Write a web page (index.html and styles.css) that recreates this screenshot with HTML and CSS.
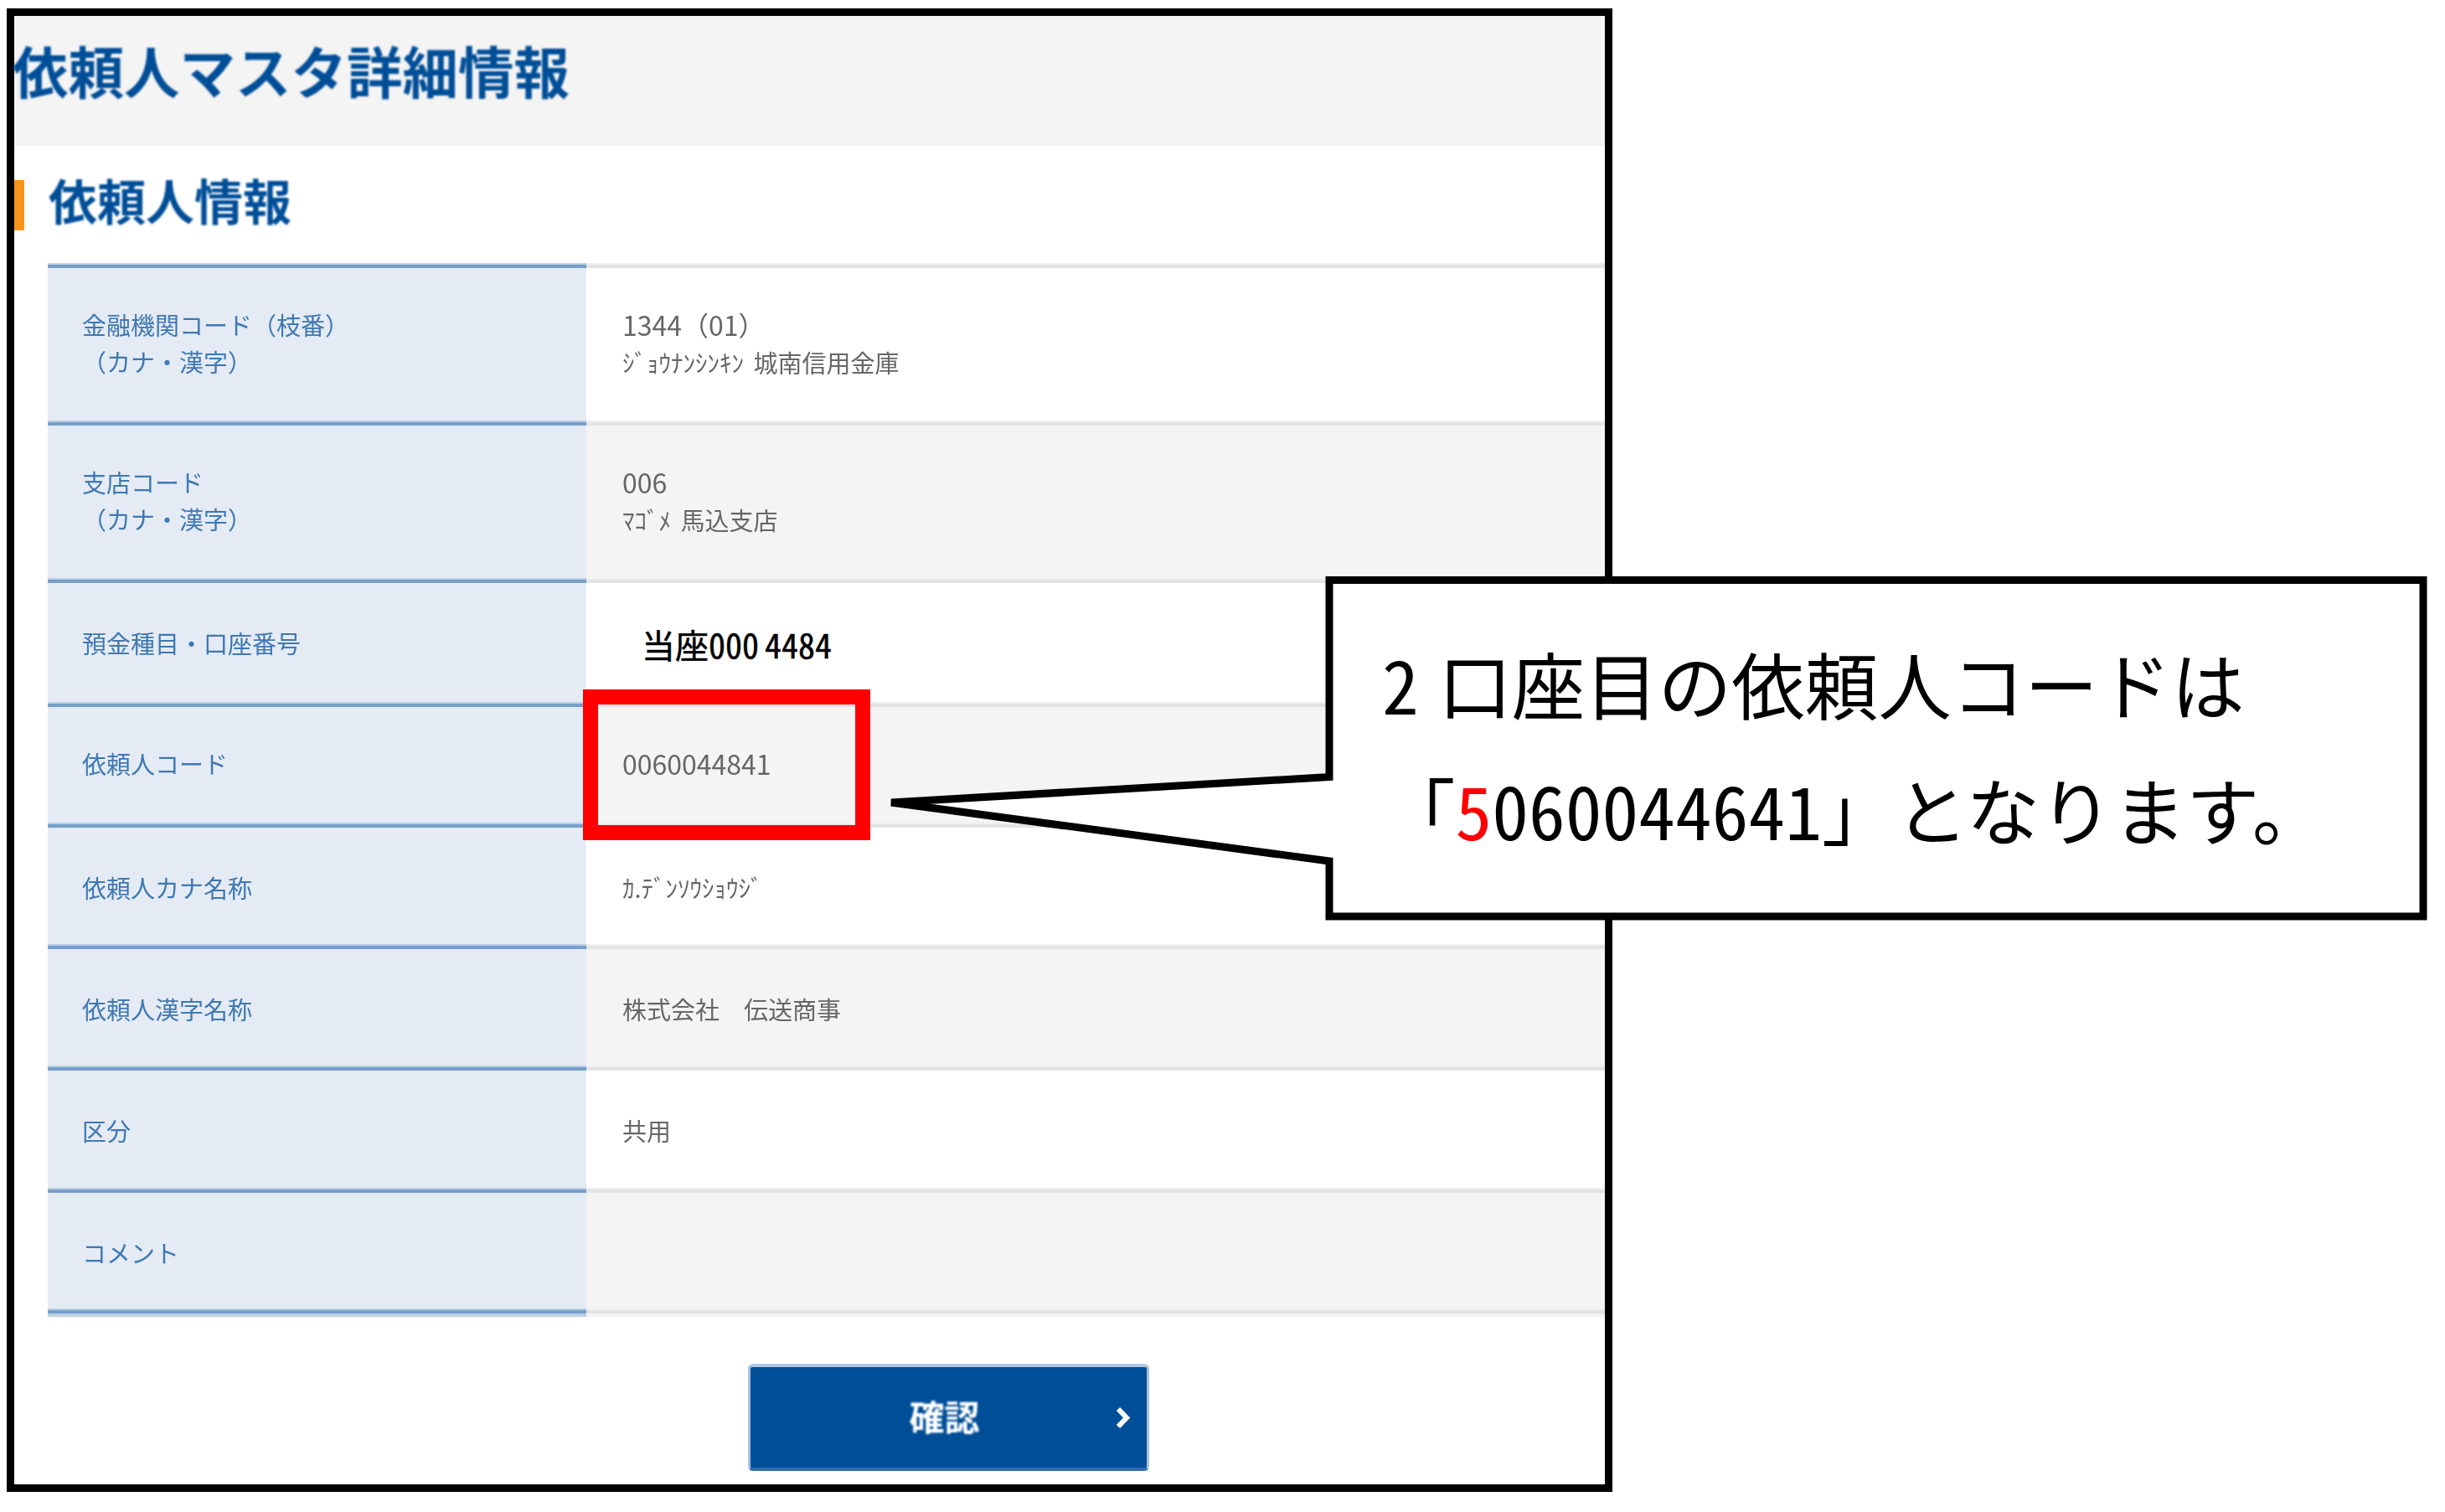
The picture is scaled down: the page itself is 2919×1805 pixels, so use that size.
FILE: index.html
```html
<!DOCTYPE html>
<html lang="ja">
<head>
    <meta charset="UTF-8">
    <title>依頼人マスタ詳細情報</title>
    <link rel="stylesheet" href="styles.css">
</head>
<body>
    <div class="frame">
        <div class="title-bar"><h1>依頼人マスタ詳細情報</h1></div>

        <div class="section-head">
            <span class="section-mark"></span>
            <h2>依頼人情報</h2>
        </div>

        <div class="rows">
            <div class="row tall">
                <div class="label">金融機関コード（枝番）<br>（カナ・漢字）</div>
                <div class="value spaced"><span class="num">1344（01）</span><br>ｼﾞｮｳﾅﾝｼﾝｷﾝ 城南信用金庫</div>
            </div>
            <div class="row alt tall">
                <div class="label">支店コード<br>（カナ・漢字）</div>
                <div class="value spaced"><span class="num">006</span><br>ﾏｺﾞﾒ 馬込支店</div>
            </div>
            <div class="row">
                <div class="label">預金種目・口座番号</div>
                <div class="value-typed">当座<span class="digits">000<span class="typed-gap">4484</span></span></div>
            </div>
            <div class="row alt tall">
                <div class="label">依頼人コード</div>
                <div class="value"><span class="num">0060044841</span></div>
            </div>
            <div class="row">
                <div class="label">依頼人カナ名称</div>
                <div class="value">ｶ.ﾃﾞﾝｿｳｼｮｳｼﾞ</div>
            </div>
            <div class="row alt">
                <div class="label">依頼人漢字名称</div>
                <div class="value">株式会社　伝送商事</div>
            </div>
            <div class="row">
                <div class="label">区分</div>
                <div class="value">共用</div>
            </div>
            <div class="row alt">
                <div class="label">コメント</div>
                <div class="value"></div>
            </div>
            <div class="row closing">
                <div class="label"></div>
                <div class="value"></div>
            </div>
        </div>

        <div class="actions">
            <button class="confirm-button">
                <span class="confirm-text">確認</span>
                <svg class="confirm-arrow" viewBox="0 0 17 27" width="17" height="27">
                    <polyline points="3,3 13,13.5 3,24" fill="none" stroke="#fff" stroke-width="6"/>
                </svg>
            </button>
        </div>
    </div>

    <div class="highlight-box"></div>

    <div class="callout">
        <svg class="callout-shape" viewBox="0 0 1850 420" width="1850" height="420">
            <polygon points="529,4.5 1835,4.5 1835,406 529,406 529,340 6,270 529,239.5" fill="#fff" stroke="#000" stroke-width="9"/>
        </svg>
        <div class="callout-text">
            <p class="first-line"><span class="digits">2</span> 口座目の依頼人コードは</p>
            <p>「<span class="digits"><span class="red">5</span>060044641</span>」となります。</p>
        </div>
    </div>
</body>
</html>
```

FILE: styles.css
```css
body {
    margin: 0;
    width: 2919px;
    height: 1805px;
    position: relative;
    overflow: hidden;
    background: #fff;
    font-family: "Noto Sans CJK JP", sans-serif;
}
.frame {
    box-sizing: border-box;
    width: 1917px;
    height: 1771px;
    margin: 10px 0 0 8px;
    border: 9px solid #000;
}
.title-bar {
    height: 155px;
    background: #f4f4f4;
    display: flex;
    align-items: center;
    padding: 0 0 28px 0;
    box-sizing: border-box;
}
.title-bar h1 {
    margin: 0 0 0 -2px;
    font-size: 66.5px;
    line-height: 80px;
    color: #004e98;
    filter: blur(0.9px);
}
.section-head {
    height: 142px;
    display: flex;
    align-items: flex-start;
}
.section-mark {
    width: 12px;
    height: 60px;
    margin-top: 41px;
    background: #f7941d;
}
.section-head h2 {
    margin: 26px 0 0 29px;
    font-size: 58px;
    line-height: 76px;
    color: #004e98;
    filter: blur(0.9px);
}
.rows {
    margin-left: 40px;
    display: grid;
    grid-template-rows: 188px 188px 148px 144px 145px 145px 146px 144px 8px;
}
.row {
    display: grid;
    grid-template-columns: 643px 1fr;
    background: #fff;
}
.row.alt {
    background: #f4f4f4;
}
.label {
    background: #e4ebf4;
    border-top: 4px solid #769fca;
    box-shadow: 0 -2px 0 #bed0e5;
    padding: 49px 0 0 41px;
    font-size: 29px;
    line-height: 44px;
    color: #3f78b2;
    filter: blur(0.7px);
}
.value {
    border-top: 4px solid #e3e3e3;
    box-shadow: 0 -2px 0 #f0f0f0;
    padding: 49px 0 0 43px;
    font-size: 29px;
    line-height: 44px;
    color: #666;
    filter: blur(0.7px);
}
.row.tall .label, .row.tall .value {
    padding-top: 45px;
}
.spaced {
    word-spacing: 5px;
}
.num {
    font-size: 32px;
}
.value-typed {
    border-top: 4px solid #e3e3e3;
    box-shadow: 0 -2px 0 #f0f0f0;
    padding: 48px 0 0 66px;
    font-size: 40px;
    line-height: 50px;
    color: #000;
    -webkit-text-stroke: 0.5px #000;
}
.typed-gap {
    margin-left: 7px;
}
.digits {
    font-feature-settings: "hwid";
}
.closing .label, .closing .value {
    padding: 0;
}
.closing .label {
    background: #bed0e5;
}
.closing .value {
    background: #f4f4f4;
}
.actions {
    margin: 56px 0 0 876px;
}
.confirm-button {
    box-sizing: border-box;
    width: 479px;
    height: 128px;
    position: relative;
    padding: 0 10px 6px 0;
    background: #004e98;
    border-width: 4px 3px;
    border-style: solid;
    border-color: #b0c8e2 #a5c0dc #2f6cab;
    border-radius: 6px;
    color: #fff;
    font-family: "Noto Sans CJK JP", sans-serif;
    font-size: 42px;
    font-weight: 700;
}
.confirm-text {
    filter: blur(0.9px);
    display: inline-block;
}
.confirm-arrow {
    position: absolute;
    right: 20px;
    top: 47px;
}
.highlight-box {
    position: absolute;
    left: 696px;
    top: 823px;
    box-sizing: border-box;
    width: 343px;
    height: 180px;
    border: 18px solid #f00;
}
.callout {
    position: absolute;
    left: 1058px;
    top: 688px;
}
.callout-shape {
    display: block;
}
.callout-text {
    position: absolute;
    left: 592px;
    top: 52px;
    font-size: 87.5px;
    line-height: 150px;
    color: #000;
    white-space: nowrap;
}
.callout-text p {
    margin: 0;
}
.first-line {
    word-spacing: 4px;
}
.red {
    color: #f00;
}
```
